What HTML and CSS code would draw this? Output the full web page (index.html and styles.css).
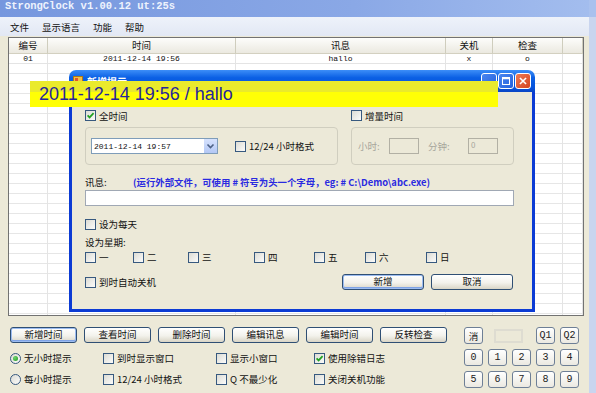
FILE: index.html
```html
<!DOCTYPE html>
<html>
<head>
<meta charset="utf-8">
<title>StrongClock</title>
<link rel="stylesheet" href="styles.css">
</head>
<body>
<div class="app">
  <div class="main">
    <div class="titlebar">StrongClock v1.00.12 ut:25s</div>
    <div class="menubar"><span>文件</span><span>显示语言</span><span>功能</span><span>帮助</span></div>
    <div class="content">
      <div class="list">
        <div class="hd">编号</div><div class="hd">时间</div><div class="hd">讯息</div><div class="hd">关机</div><div class="hd">检查</div><div class="hd"></div>
        <div class="cell">01</div><div class="cell">2011-12-14 19:56</div><div class="cell">hallo</div><div class="cell">x</div><div class="cell">o</div><div class="cell"></div>
        <div class="fill"></div><div class="fill"></div><div class="fill"></div><div class="fill"></div><div class="fill"></div><div class="fill"></div>
      </div>
      <div class="bottom">
        <div class="left">
          <div class="btnrow">
            <div class="btn default">新增时间</div>
            <div class="btn">查看时间</div>
            <div class="btn">删除时间</div>
            <div class="btn">编辑讯息</div>
            <div class="btn">编辑时间</div>
            <div class="btn">反转检查</div>
          </div>
          <div class="opts">
            <div class="opt"><span class="radio on"></span>无小时提示</div>
            <div class="opt"><span class="chk"></span>到时显示窗口</div>
            <div class="opt"><span class="chk"></span>显示小窗口</div>
            <div class="opt"><span class="chk"><svg viewBox="0 0 9 9"><path d="M1.6 4.3 L3.6 6.4 L7.6 2.1" fill="none" stroke="#21a121" stroke-width="1.7"/></svg></span>使用除错日志</div>
            <div class="opt"><span class="radio"></span>每小时提示</div>
            <div class="opt"><span class="chk"></span>12/24 小时格式</div>
            <div class="opt"><span class="chk"></span>Q 不最少化</div>
            <div class="opt"><span class="chk"></span>关闭关机功能</div>
          </div>
        </div>
        <div class="keypad">
          <div class="key cjk">消</div>
          <div class="ghost"></div>
          <div class="key">Q1</div>
          <div class="key">Q2</div>
          <div class="key">0</div><div class="key">1</div><div class="key">2</div><div class="key">3</div><div class="key">4</div>
          <div class="key">5</div><div class="key">6</div><div class="key">7</div><div class="key">8</div><div class="key">9</div>
        </div>
      </div>
    </div>
  </div>
  <div class="frame-right"></div>
</div>

<div class="dialog">
  <div class="dlg-title">
    <svg class="dlg-icon" viewBox="0 0 10 10"><rect x="0.5" y="0.5" width="9" height="9" fill="#f3c04a" stroke="#b07a14"/><rect x="2" y="2" width="3" height="3" fill="#e2562a"/><rect x="5.5" y="5" width="3" height="3" fill="#2a6ad8"/></svg>
    <span class="dlg-caption">新增提示</span>
    <div class="tb-btns">
      <div class="tb"><svg viewBox="0 0 16 16"><rect x="4" y="10" width="6" height="2" fill="#fff"/></svg></div>
      <div class="tb"><svg viewBox="0 0 16 16"><rect x="4" y="4" width="8" height="8" fill="none" stroke="#fff" stroke-width="1.2"/><rect x="4" y="4" width="8" height="2" fill="#fff"/></svg></div>
      <div class="tb close"><svg viewBox="0 0 16 16"><path d="M4.5 4.5 L11.5 11.5 M11.5 4.5 L4.5 11.5" stroke="#fff" stroke-width="1.8"/></svg></div>
    </div>
  </div>
  <div class="dlg-body">
    <div class="dlg-cols head">
      <div class="colL"><div class="opt"><span class="chk"><svg viewBox="0 0 9 9"><path d="M1.6 4.3 L3.6 6.4 L7.6 2.1" fill="none" stroke="#21a121" stroke-width="1.7"/></svg></span>全时间</div></div>
      <div class="colR"><div class="opt"><span class="chk"></span>增量时间</div></div>
    </div>
    <div class="dlg-cols groups">
      <div class="group colL gl">
        <div class="combo"><span class="combo-text">2011-12-14 19:57</span><span class="combo-btn"><svg viewBox="0 0 13 14"><path d="M3.5 5.5 L6.5 8.5 L9.5 5.5" fill="none" stroke="#4d6185" stroke-width="1.6"/></svg></span></div>
        <div class="opt fmt"><span class="chk"></span>12/24 小时格式</div>
      </div>
      <div class="group colR gr">
        <span class="glabel">小时:</span><span class="tinput"></span>
        <span class="glabel wide">分钟:</span><span class="tinput">0</span>
      </div>
    </div>
    <div class="msg-row"><span class="msg-label">讯息:</span><span class="msg-hint">(运行外部文件，可使用 # 符号为头一个字母，eg: # C:\Demo\abc.exe)</span></div>
    <div class="msg-input"></div>
    <div class="opt daily"><span class="chk"></span>设为每天</div>
    <div class="week-label">设为星期:</div>
    <div class="weekdays">
      <div class="opt"><span class="chk"></span>一</div>
      <div class="opt"><span class="chk"></span>二</div>
      <div class="opt"><span class="chk"></span>三</div>
      <div class="opt"><span class="chk"></span>四</div>
      <div class="opt"><span class="chk"></span>五</div>
      <div class="opt"><span class="chk"></span>六</div>
      <div class="opt"><span class="chk"></span>日</div>
    </div>
    <div class="last-row">
      <div class="opt"><span class="chk"></span>到时自动关机</div>
      <div class="dlg-btns">
        <div class="btn wide default">新增</div>
        <div class="btn wide">取消</div>
      </div>
    </div>
  </div>
</div>

<div class="banner">2011-12-14 19:56 / hallo</div>
</body>
</html>
```

FILE: styles.css
```css
html, body {
  margin: 0;
  padding: 0;
}
body {
  width: 596px;
  height: 393px;
  overflow: hidden;
  position: relative;
  background: #ece9d8;
  font-family: "Noto Sans CJK SC", "Liberation Sans", sans-serif;
  font-size: 9.5px;
  color: #111;
}

.app {
  display: flex;
  height: 393px;
}
.main {
  flex: 1;
  display: flex;
  flex-direction: column;
}
.frame-right {
  width: 7px;
  background: linear-gradient(to bottom, #a9c1ee 0 17px, #c9d5ef 17px);
}

.titlebar {
  height: 17px;
  line-height: 17px;
  padding-left: 5px;
  background: linear-gradient(to right, #7697de, #8aa8e6 60%, #a3bdee);
  color: #eef3fd;
  font: bold 10.5px "Liberation Mono", monospace;
  white-space: nowrap;
}
.menubar {
  height: 19px;
  display: flex;
  align-items: center;
  gap: 13px;
  padding-left: 10px;
  background: linear-gradient(#eef2fa, #e2e8f4);
}

.content {
  flex: 1;
  display: flex;
  flex-direction: column;
  padding: 1px 5px 0 8px;
}
.list {
  height: 279px;
  box-sizing: border-box;
  border: 1px solid #727272;
  background: #fff;
  display: grid;
  grid-template-columns: 39px 188px 210px 47px 70px 1fr;
  grid-template-rows: 16px 10px 1fr;
}
.hd {
  box-sizing: border-box;
  background: linear-gradient(#fdfdfb, #ebe9e0);
  border-right: 1px solid #cfcdbd;
  border-bottom: 1px solid #d3d0c0;
  text-align: center;
  line-height: 15px;
}
.cell {
  box-sizing: border-box;
  font: 8px "Liberation Mono", monospace;
  line-height: 10px;
  text-align: center;
  border-right: 1px solid #e4e4e4;
  border-bottom: 1px solid #e4e4e4;
  white-space: nowrap;
}
.fill {
  border-right: 1px solid #e4e4e4;
  background: repeating-linear-gradient(to bottom, #fff 0 9px, #e6e6e6 9px 10px);
}

.bottom {
  display: flex;
  padding: 11px 0 0 2px;
}
.left {
  display: flex;
  flex-direction: column;
}
.btnrow {
  display: flex;
  gap: 7px;
}
.btn {
  width: 67px;
  height: 16px;
  box-sizing: border-box;
  border: 1px solid #2f4f74;
  border-radius: 3px;
  background: linear-gradient(#ffffff, #f3f2ec 55%, #d9d5c6);
  display: flex;
  align-items: center;
  justify-content: center;
  line-height: 1;
}
.btn.default {
  box-shadow: inset 0 0 0 1px #9cbcf0, inset 0 -1px 0 1px #7fa3e6;
}
.btn.wide {
  width: 82px;
}

.opts {
  display: grid;
  grid-template-columns: 93px 113px 98px auto;
  row-gap: 9px;
  margin-top: 9px;
}
.opt {
  display: flex;
  align-items: center;
  gap: 3px;
  height: 12px;
  white-space: nowrap;
}
.chk {
  width: 11px;
  height: 11px;
  box-sizing: border-box;
  border: 1px solid #37597f;
  background: linear-gradient(135deg, #dcdcd5, #fbfbfa);
  display: inline-flex;
  flex: none;
}
.chk svg {
  width: 9px;
  height: 9px;
}
.radio {
  width: 11px;
  height: 11px;
  box-sizing: border-box;
  border: 1px solid #37597f;
  border-radius: 50%;
  background: linear-gradient(135deg, #dcdcd5, #fbfbfa);
  flex: none;
  display: inline-flex;
  align-items: center;
  justify-content: center;
}
.radio.on::after {
  content: "";
  width: 5px;
  height: 5px;
  border-radius: 50%;
  background: radial-gradient(circle at 35% 35%, #6fd36f, #1f9a1f);
}

.keypad {
  margin-left: auto;
  margin-right: 5px;
  display: grid;
  grid-template-columns: repeat(5, 19px);
  grid-auto-rows: 17px;
  gap: 5px;
}
.key {
  box-sizing: border-box;
  border: 1px solid #6e7f96;
  border-radius: 3px;
  background: linear-gradient(#ffffff, #ebe9e1);
  display: flex;
  align-items: center;
  justify-content: center;
  font: 10px "Liberation Mono", monospace;
  color: #222;
}
.key.cjk {
  font-family: "Noto Sans CJK SC", sans-serif;
  font-size: 9.5px;
}
.ghost {
  grid-column: 2 / 4;
  margin: 2px 8px 1px 6px;
  border: 2px solid #dedcd1;
}

/* dialog window */
.dialog {
  position: absolute;
  left: 69px;
  top: 70px;
  width: 466px;
  height: 242px;
  display: flex;
  flex-direction: column;
}
.dlg-title {
  height: 22px;
  box-sizing: border-box;
  border-radius: 7px 7px 0 0;
  background: linear-gradient(#3d8ef8, #0b60e4 35%, #0552dd 80%, #0a45c4);
  display: flex;
  align-items: center;
  padding: 0 4px 0 4px;
  color: #fff;
}
.dlg-icon {
  width: 10px;
  height: 10px;
  flex: none;
}
.dlg-caption {
  margin-left: 4px;
  font-weight: bold;
  font-size: 10px;
}
.tb-btns {
  margin-left: auto;
  display: flex;
  gap: 1px;
}
.tb {
  width: 16px;
  height: 16px;
  box-sizing: border-box;
  border: 1px solid #fff;
  border-radius: 3px;
  background: linear-gradient(135deg, #4a86f0, #2461dc);
  display: flex;
}
.tb.close {
  background: linear-gradient(135deg, #ee7a55, #d4441e);
}
.tb svg {
  width: 14px;
  height: 14px;
}
.dlg-body {
  flex: 1;
  background: #ece9d8;
  border: 3px solid #0c3bd4;
  border-top: 0;
  padding: 0 18px 0 13px;
  display: flex;
  flex-direction: column;
}
.dlg-cols {
  display: flex;
  gap: 13px;
}
.dlg-cols.head {
  margin-top: 17px;
  height: 13px;
  align-items: center;
}
.colL {
  width: 253px;
}
.colR {
  width: 163px;
}
.dlg-cols.groups {
  margin-top: 5px;
}
.group {
  height: 38px;
  box-sizing: border-box;
  border: 1px solid #d0cebf;
  border-radius: 4px;
  display: flex;
  align-items: center;
}
.gl {
  padding-left: 5px;
}
.gr {
  padding-left: 6px;
}
.combo {
  width: 127px;
  height: 16px;
  box-sizing: border-box;
  border: 1px solid #7f9db9;
  background: #fff;
  display: flex;
  align-items: center;
}
.combo-text {
  flex: 1;
  padding-left: 2px;
  font: 8px "Liberation Mono", monospace;
}
.combo-btn {
  width: 13px;
  height: 14px;
  background: linear-gradient(#d6e2fd, #b3c8f5);
  display: flex;
}
.combo-btn svg {
  width: 13px;
  height: 14px;
}
.fmt {
  margin-left: 17px;
}
.glabel {
  width: 31px;
  color: #a7a69c;
}
.glabel.wide {
  width: 40px;
  margin-left: 9px;
}
.tinput {
  width: 30px;
  height: 16px;
  box-sizing: border-box;
  border: 1px solid #b2b0a4;
  color: #a7a69c;
  font-size: 8px;
  padding-left: 2px;
  line-height: 12px;
}

.msg-row {
  margin-top: 11px;
  height: 12px;
  display: flex;
  align-items: center;
  white-space: nowrap;
}
.msg-label {
  width: 48px;
}
.msg-hint {
  color: #2a2ae0;
  font-weight: bold;
  font-size: 9.4px;
}
.msg-input {
  margin-top: 2px;
  height: 16px;
  box-sizing: border-box;
  border: 1px solid #a0a8b4;
  background: #fff;
}
.daily {
  margin-top: 12px;
}
.week-label {
  margin-top: 6px;
  height: 12px;
  line-height: 12px;
}
.weekdays {
  margin-top: 3px;
  display: grid;
  grid-template-columns: 48px 55px 66px 60px 51px 61px auto;
}
.last-row {
  margin-top: 11px;
  height: 16px;
  display: flex;
  align-items: center;
}
.dlg-btns {
  margin-left: auto;
  margin-right: 1px;
  display: flex;
  gap: 7px;
}

.banner {
  position: absolute;
  left: 30px;
  top: 81px;
  width: 468px;
  height: 26px;
  box-sizing: border-box;
  padding-left: 9px;
  background: linear-gradient(#eaea2c 0 11px, #ffff06 11px);
  color: #26269a;
  font: 18px "Liberation Sans", Arial, sans-serif;
  line-height: 26px;
  white-space: nowrap;
}
```
